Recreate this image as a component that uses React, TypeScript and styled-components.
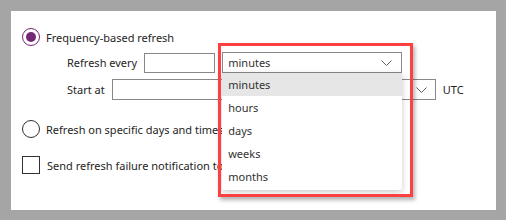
import styled, { createGlobalStyle } from "styled-components";

const GlobalStyle = createGlobalStyle`
  html, body {
    margin: 0;
    padding: 0;
    background: #a5a5a5;
  }
  body {
    font-family: "Noto Sans", "Open Sans", sans-serif;
    font-size: 11px;
    color: #252423;
  }
`;

const options = ["minutes", "hours", "days", "weeks", "months"];

const Chevron = () => (
  <svg width="11" height="6" viewBox="0 0 11 6">
    <path d="M0.5 0.5 L5.5 5.5 L10.5 0.5" fill="none" stroke="#605e5c" strokeWidth="1" />
  </svg>
);

const App = () => {
  return (
    <Page>
      <GlobalStyle />
      <Panel>
        <RadioRow>
          <Radio checked />
          <span>Frequency-based refresh</span>
        </RadioRow>

        <SubRow>
          <span>Refresh every</span>
          <TextBox width={71} />
          <SelectWrap>
            <SelectBox>
              <span>minutes</span>
              <Chevron />
            </SelectBox>
            <Menu>
              {options.map((o, i) => (
                <MenuItem key={o} selected={i === 0}>
                  {o}
                </MenuItem>
              ))}
            </Menu>
            <Highlight />
          </SelectWrap>
        </SubRow>

        <SubRow>
          <span>Start at</span>
          <ComboBox>
            <Chevron />
          </ComboBox>
          <span>UTC</span>
        </SubRow>

        <RadioRow className="second">
          <Radio />
          <span>Refresh on specific days and times</span>
        </RadioRow>

        <CheckRow>
          <Checkbox />
          <span>Send refresh failure notification to dataset owner</span>
        </CheckRow>
      </Panel>
    </Page>
  );
};

export default App;

const Page = styled.div`
  width: 506px;
  height: 220px;
  box-sizing: border-box;
  padding: 11px 10px 10px 11px;
`;

const Panel = styled.div`
  width: 485px;
  height: 199px;
  background: #ffffff;
  box-sizing: border-box;
  padding: 17px 0 0 11px;
  display: flex;
  flex-direction: column;
  overflow: hidden;
`;

const RadioRow = styled.div`
  display: flex;
  align-items: center;
  gap: 6px;
  height: 18px;
  white-space: nowrap;

  &.second {
    margin-top: 20px;
  }
`;

const Radio = styled.span<{ checked?: boolean }>`
  width: 18px;
  height: 18px;
  box-sizing: border-box;
  border-radius: 50%;
  border: 1.5px solid ${({ checked }) => (checked ? "#742774" : "#323130")};
  display: flex;
  align-items: center;
  justify-content: center;
  flex-shrink: 0;

  &::after {
    content: "";
    display: ${({ checked }) => (checked ? "block" : "none")};
    width: 10px;
    height: 10px;
    border-radius: 50%;
    background: #742774;
  }
`;

const SubRow = styled.div`
  display: flex;
  align-items: center;
  gap: 7px;
  height: 21px;
  margin-top: 6px;
  padding-left: 45px;
  white-space: nowrap;
`;

const TextBox = styled.div<{ width: number }>`
  width: ${({ width }) => width}px;
  height: 20px;
  box-sizing: border-box;
  border: 1px solid #8a8886;
`;

const ComboBox = styled.div`
  width: 324px;
  height: 21px;
  box-sizing: border-box;
  border: 1px solid #8a8886;
  display: flex;
  align-items: center;
  justify-content: flex-end;
  padding-right: 8px;
`;

const SelectWrap = styled.div`
  position: relative;
  z-index: 2;
`;

const SelectBox = styled.div`
  width: 180px;
  height: 21px;
  box-sizing: border-box;
  border: 1px solid #8a8886;
  display: flex;
  align-items: center;
  justify-content: space-between;
  padding: 0 9px 0 5px;
  background: #ffffff;
  color: #323130;
`;

const Menu = styled.div`
  position: absolute;
  top: 21px;
  left: 0;
  width: 180px;
  background: #ffffff;
  border-radius: 0 0 2px 2px;
  box-shadow: 0 2px 6px rgba(0, 0, 0, 0.22);
  padding-bottom: 2px;
`;

const MenuItem = styled.div<{ selected?: boolean }>`
  height: 23px;
  line-height: 23px;
  padding-left: 6px;
  color: #323130;
  background: ${({ selected }) => (selected ? "#e6e6e6" : "transparent")};
`;

const Highlight = styled.div`
  position: absolute;
  left: -4px;
  top: -9px;
  width: 195px;
  height: 154px;
  box-sizing: border-box;
  border: 3px solid #ff4040;
  box-shadow: 2px 3px 4px rgba(0, 0, 0, 0.3);
  pointer-events: none;
`;

const CheckRow = styled.div`
  display: flex;
  align-items: center;
  gap: 7px;
  height: 18px;
  margin-top: 18px;
  white-space: nowrap;
`;

const Checkbox = styled.span`
  width: 18px;
  height: 18px;
  box-sizing: border-box;
  border: 1px solid #323130;
  flex-shrink: 0;
`;
